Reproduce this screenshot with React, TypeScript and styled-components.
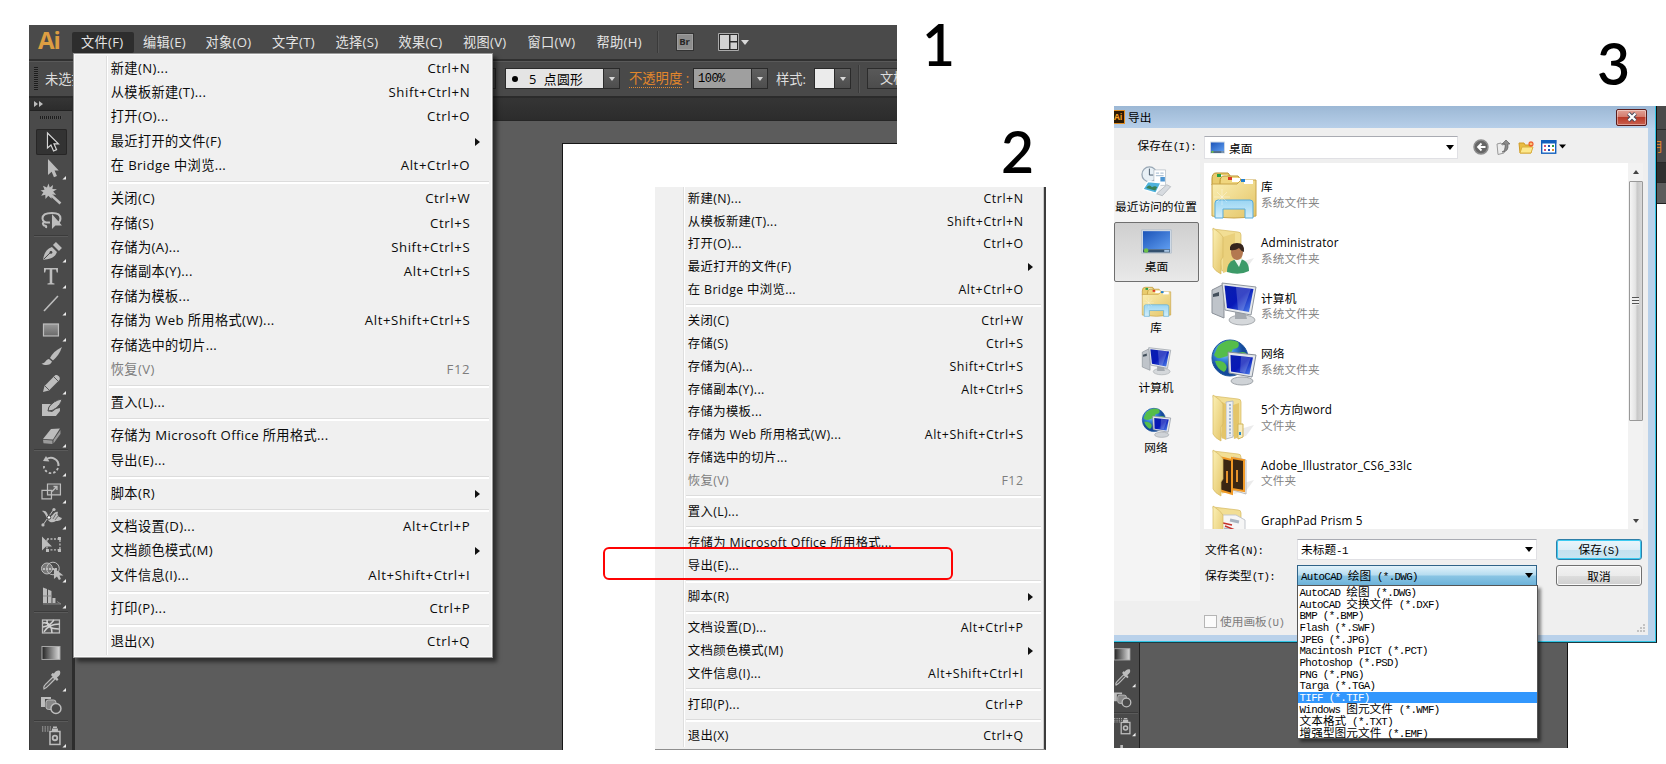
import React from "react";
import styled, { createGlobalStyle, css } from "styled-components";

const ui = `"Open Sans", "Noto Sans CJK SC", sans-serif`;
const mono = `"Liberation Mono", "Noto Sans CJK SC", monospace`;

const Global = createGlobalStyle`
  body { margin: 0; background: #fff; }
  svg { display: block; flex: none; }
  * { box-sizing: border-box; }
`;

const Page = styled.main`
  position: relative;
  width: 1666px;
  height: 764px;
  overflow: hidden;
  background: #fff;
  font-family: ${ui};
`;

const StepNumber = styled.div<{ $x: number; $y: number }>`
  position: absolute;
  left: ${(p) => p.$x}px;
  top: ${(p) => p.$y}px;
  font: 600 57px/57px Lato, sans-serif;
  color: #000;
`;

/* ---------- illustrator window ---------- */

const AppWindow = styled.section`
  position: absolute;
  left: 29px;
  top: 25px;
  width: 868px;
  height: 725px;
  display: flex;
  flex-direction: column;
  overflow: hidden;
`;

const MenuBar = styled.nav`
  flex: none;
  height: 34px;
  display: flex;
  align-items: center;
  background: #4a4a4a;
  color: #e4e4e4;
  font-size: 13.2px;
`;

const Logo = styled.div`
  width: 43px;
  padding-left: 9px;
  height: 34px;
  font: 700 24px/29px "Open Sans", sans-serif;
  letter-spacing: -1px;
  color: #dc9d42;
`;

const BarItem = styled.div<{ $w: number; $active?: boolean }>`
  width: ${(p) => p.$w}px;
  height: 21px;
  margin-top: 1px;
  padding-left: 9px;
  line-height: 20px;
  white-space: nowrap;
  letter-spacing: 0.3px;
  border-radius: 2px;
  background: ${(p) => (p.$active ? "#2d2d2d" : "transparent")};
`;

const Rule = styled.i<{ $h: number; $l: number }>`
  flex: none;
  width: 2px;
  height: ${(p) => p.$h}px;
  margin-left: ${(p) => p.$l}px;
  background: #3a3a3a;
  border-right: 1px solid #565656;
`;

const BridgeButton = styled.div`
  width: 18px;
  height: 18px;
  margin-left: 17px;
  border: 1px solid #333;
  background: #8d8d8d;
  box-shadow: inset 0 0 0 1px #9f9f9f;
  color: #262626;
  font: 700 9.5px/16px "Open Sans", sans-serif;
  text-align: center;
`;

const LayoutButton = styled.div`
  display: flex;
  align-items: center;
  gap: 2px;
  margin-left: 24px;
`;

const ControlBar = styled.div`
  flex: none;
  height: 39px;
  padding-left: 5px;
  display: flex;
  align-items: center;
  background: #494949;
  border-top: 2px solid #303030;
  border-bottom: 2px solid #2b2b2b;
  box-shadow: inset 0 1px 0 #595959;
  color: #dedede;
  font-size: 13.3px;
  white-space: nowrap;
  overflow: hidden;
  & > * {
    flex: none;
  }
`;

const Grip = styled.i<{ $w: number; $h: number; $vertical?: boolean }>`
  flex: none;
  width: ${(p) => p.$w}px;
  height: ${(p) => p.$h}px;
  background: repeating-linear-gradient(
    ${(p) => (p.$vertical ? "180deg" : "90deg")},
    #1d1d1d 0 1px,
    #505050 1px 2px
  );
`;

const SelectionState = styled.span`
  width: 432px;
  margin-left: 7px;
  line-height: 20px;
`;

const Field = styled.div<{ $l: number }>`
  display: flex;
  height: 21px;
  margin-left: ${(p) => p.$l}px;
  border: 1px solid #2a2a2a;
  color: #000;
`;

const FieldValue = styled.div<{ $w: number; $bg: string }>`
  width: ${(p) => p.$w}px;
  display: flex;
  align-items: center;
  padding-left: 4px;
  background: ${(p) => p.$bg};
  font-size: 12.8px;
  line-height: 18px;
  letter-spacing: 0.3px;
  white-space: pre;
`;

const MonoValue = styled.span`
  font-family: "Liberation Mono", monospace;
  font-size: 12px;
  letter-spacing: -0.5px;
`;

const BrushDot = styled.i`
  width: 6px;
  height: 6px;
  margin: 0 11px 0 2px;
  border-radius: 50%;
  background: #000;
`;

const DropButton = styled.div`
  width: 16px;
  display: flex;
  align-items: center;
  justify-content: center;
  background: linear-gradient(#606060, #4d4d4d);
  border-left: 1px solid #2a2a2a;
`;

const Triangle = styled.i<{ $c: string; $s?: number }>`
  width: 0;
  height: 0;
  border: ${(p) => p.$s ?? 3.5}px solid transparent;
  border-top: ${(p) => (p.$s ?? 3.5) + 1}px solid ${(p) => p.$c};
  border-bottom: 0;
`;

const OpacityLabel = styled.span`
  margin-left: 9px;
  width: 64px;
  color: #e2862c;
  line-height: 17px;
  & > u {
    text-decoration: none;
    display: inline-block;
    border-bottom: 1px dotted #e2862c;
  }
`;

const StyleLabel = styled.span`
  margin-left: 8px;
  width: 30px;
`;

const DocButton = styled.div`
  margin-left: 7px;
  width: 80px;
  height: 21px;
  padding-left: 12px;
  line-height: 18px;
  border: 1px solid #2c2c2c;
  background: linear-gradient(#595959, #4c4c4c);
`;

const WorkArea = styled.div`
  flex: 1;
  min-height: 0;
  display: flex;
  background: #5c5c5c;
`;

const DocumentArea = styled.div`
  flex: 1;
  display: flex;
  flex-direction: column;
`;

const TabStrip = styled.div`
  height: 23px;
  background: linear-gradient(#353535, #2c2c2c);
  border-bottom: 1px solid #262626;
`;

const Artboard = styled.div`
  flex: 1;
  margin: 22px 0 0 487px;
  background: #fff;
  border-left: 1px solid #161616;
  border-top: 1px solid #161616;
`;

/* ---------- tool column ---------- */

const ToolColumn = styled.aside<{ $w: number }>`
  flex: none;
  width: ${(p) => p.$w}px;
  display: flex;
  flex-direction: column;
  align-items: center;
  background: #4a4a4a;
  border-left: 1px solid #3a3a3a;
  border-right: 3px solid #2d2d2d;
  overflow: hidden;
`;

const ToolHeader = styled.div`
  flex: none;
  align-self: stretch;
  height: 13px;
  padding: 3px 0 0 4px;
  background: linear-gradient(#353535, #2c2c2c);
  border-bottom: 1px solid #222;
`;

const GripRow = styled.div`
  flex: none;
  height: 18px;
  display: flex;
  align-items: center;
  padding-bottom: 5px;
`;

const ToolCell = styled.div<{ $u: number; $active?: boolean }>`
  flex: none;
  width: 31px;
  height: ${(p) => p.$u}px;
  display: flex;
  align-items: center;
  justify-content: center;
  ${(p) =>
    p.$active &&
    css`
      background: #333;
      box-shadow: inset 0 0 0 1px #272626;
      border-radius: 2px;
    `}
`;

const ToolRule = styled.i<{ $w: number }>`
  flex: none;
  width: ${(p) => p.$w}px;
  height: 2px;
  margin-bottom: 1px;
  background: #3b3b3b;
  border-bottom: 1px solid #5a5a5a;
`;

const c = "#bdbdbd";
const tools: Record<string, React.ReactNode> = {
  select: <path d="M10.5 4v15l3.5-3 2.6 6 3-1.3-2.6-5.8h4.5z" fill="#222" stroke="#d5d5d5" strokeWidth="1.2" />,
  direct: <path d="M11 4v16l3.7-3.2 2.3 5.4 3-1.2-2.4-5.4h4.2z" fill={c} />,
  wand: (
    <>
      <path d="M13 12l10.500 9.500" stroke={c} strokeWidth="2.600" />
      <path d="M11.500 1.500l1.300 4 3.300-2.500-.7 4 4.600.2-3.800 2.300 3 3.400-4.300-.4-.3 4.200-3.300-3-2.800 3.400-.2-4.300-4.100 1 2.200-3.500-2.900-1.700 4-.8-1.500-4 4 1.700z" fill={c} />
    </>
  ),
  lasso: (
    <>
      <path d="M13 14.500c-4 .5-7.500-.5-7.500-4 0-4 4.500-5.500 9.500-5.500s8.500 2 8.500 5.500-1.500 4-3.500 5M9 14.500c-2.500-1-4 1-2.500 2.500s3.500 0 2.500 3" fill="none" stroke={c} strokeWidth="2" />
      <path d="M15 6v15l3.500-3.500h6.500z" fill={c} />
    </>
  ),
  pen: (
    <>
      <path d="M6 22c1-6 3-11 9-13l5 5c-2 6-7 7-14 8z" fill={c} />
      <path d="M16 7l3-3 6 6-3 3z" fill={c} />
      <path d="M6.500 21.500l7-7" stroke="#444" />
      <circle cx="14" cy="14.500" r="1.400" fill="#444" />
    </>
  ),
  type: <path d="M7 4h14v4.500h-1.200L19 5.600h-3.700V19l2.200.6v1h-7v-1l2.200-.6V5.600H9L8.200 8.500H7z" fill={c} />,
  line: <path d="M7 20L21 5" stroke={c} strokeWidth="1.600" />,
  rect: <rect x="6.500" y="7" width="15" height="12" fill="url(#toolRect)" stroke={c} strokeWidth="1.200" />,
  brush: (
    <>
      <path d="M25 3c-6 3-10 7-12 11l3 2.500C20 13 23 9 25 3z" fill={c} />
      <path d="M12 15c-3 0-3 4-7.500 4.800C8 22 14 21.500 15 17.500z" fill={c} />
    </>
  ),
  pencil: (
    <>
      <path d="M6 22l1.500-6L18 5.500c2-1.500 6 1.500 4.500 4.500L12 20.500z" fill={c} />
      <path d="M8 16l4 4M17 7l4 4" stroke="#555" />
    </>
  ),
  blob: (
    <>
      <path d="M5 8h9l-2 3-1 4 4 1 4-3 4-1v3l-4 5H5z" fill={c} />
      <path d="M25 3c-6 1-10 4-13 8l-1 4 4-.5c4.500-2 9-6 10-11.500z" fill={c} stroke="#4a4a4a" />
    </>
  ),
  eraser: (
    <>
      <path d="M6 16l8-10 9-.5-7 11z" fill={c} />
      <path d="M6 16.800l9.500.7v3.500l-9-.7zM16.500 17l7-10v4l-7 9.500z" fill="#9a9a9a" />
    </>
  ),
  rotate: (
    <>
      <path d="M9 7.500c6-4 13 0 12.500 6.500" fill="none" stroke={c} strokeWidth="2" />
      <path d="M21 16c-2 6.500-11 7.500-14 0v-4" fill="none" stroke={c} strokeWidth="1.800" strokeDasharray="2.500 2" />
      <path d="M6 9l3-5 3.500 5.500z" fill={c} />
    </>
  ),
  scale: (
    <>
      <path d="M10.500 5h13v11h-13z" fill="#5a5a5a" stroke={c} strokeWidth="1.200" />
      <path d="M5 11.500h9.500v8.500H5z" fill="none" stroke={c} strokeWidth="1.200" />
      <path d="M15 12.500l5-5m-3.500 0H20V11" fill="none" stroke={c} strokeWidth="1.400" />
    </>
  ),
  width: (
    <>
      <path d="M5 6c5-1 5 3 7 6 4 0 5-6 9-5-1 3 0 5 4 6-1 3-4 3-6 3-3 2-6 2-8-1-2-3-2-6-6-9z" fill={c} />
      <path d="M16 14l3-5M18 15l4-5" stroke="#555" strokeWidth=".8" />
      <path d="M6 20L17 4" stroke={c} />
      <circle cx="12" cy="12.500" r="1.800" fill="#fff" stroke="#444" />
      <circle cx="6" cy="20" r="1.600" fill={c} />
      <circle cx="17" cy="4.500" r="1.600" fill={c} />
    </>
  ),
  free: (
    <>
      <rect x="10" y="7" width="13" height="11" fill="none" stroke={c} strokeWidth="1.300" strokeDasharray="2 1.500" />
      <path d="M5 4.500v14l4-4h6z" fill={c} />
      <path d="M21 5h3v3h-3zM21 17h3v3h-3zM9 17h3v3H9z" fill={c} />
    </>
  ),
  shape: (
    <>
      <circle cx="10" cy="10.500" r="5.500" fill="#777" stroke={c} />
      <circle cx="16" cy="10.500" r="6.300" fill="none" stroke={c} />
      <path d="M6 11h14" stroke={c} strokeWidth="2" strokeDasharray="2 1" />
      <path d="M17 10v11l3-2.500 2 3.500 2-1-1.500-3.500h4z" fill={c} />
    </>
  ),
  perspective: (
    <>
      <path d="M6 3.500l4 1.500v14H6zM11 5.500l3.500 1.500v12H11zM15.500 14h3v5h-3z" fill={c} />
      <path d="M6 20h18l-4-2.500M6 12h9" stroke="#888" fill="none" />
    </>
  ),
  mesh: (
    <>
      <rect x="5.500" y="6" width="17" height="13" fill="#555" stroke={c} strokeWidth="1.300" />
      <path d="M6 9c7-1 9 5 9 10M10 6c0 8 5 9 12 9M7 18c4-6 8-8 16-8M17 6c-3 4-5 6-11 7" fill="none" stroke="#d0d0d0" strokeWidth="1.500" />
    </>
  ),
  gradient: <rect x="5" y="6.500" width="18" height="13" fill="url(#toolGrad)" stroke="#a9a9a9" />,
  dropper: (
    <>
      <path d="M7 22c-1-3 1-4 9-12l2 2C10 20 10 21 7 22z" fill="#555" stroke={c} strokeWidth="1.200" />
      <path d="M14 8l6 6 1.500-1.500-1.500-2c3-2 4-4 3-6.500-2-1-4.500 0-6 2.500l-1.500-.5z" fill={c} />
    </>
  ),
  blend: (
    <>
      <path d="M4 4h10v2H8v8H4z" fill={c} />
      <rect x="9" y="7" width="10" height="9.500" rx="2.500" fill="#888" stroke={c} />
      <circle cx="19" cy="15.500" r="5" fill="#4a4a4a" stroke={c} strokeWidth="1.500" />
    </>
  ),
  spray: (
    <>
      <rect x="13" y="8.500" width="10" height="13" fill="#4a4a4a" stroke={c} strokeWidth="1.500" />
      <path d="M15 5.500h6v3h-6zM16 3.500h4v1.500h-4z" fill={c} />
      <circle cx="18" cy="15" r="2.300" fill="none" stroke={c} strokeWidth="1.800" />
      <path d="M5 4h9M5 6h9M5 8h7" stroke={c} strokeDasharray="1.300 1.300" />
    </>
  ),
  graph: <path d="M7 12h3v12H7zM12 8h3v16h-3zM17 14h3v10h-3z" fill={c} />,
};

const corner = "direct pen type line rect pencil eraser rotate scale width shape perspective dropper spray".split(" ");

function Tool({ name, unit }: { name: string; unit: number }) {
  return (
    <ToolCell $u={unit} $active={name === "select"}>
      <svg width={unit * 1.17} height={unit} viewBox="-1 0 31 26.500">
        {tools[name]}
        {corner.includes(name) && <path d="M29.500 20.500v4h-4z" fill="#eee" />}
      </svg>
    </ToolCell>
  );
}

const leftTools = "select direct wand lasso | pen type line rect brush pencil blob eraser | rotate scale width free shape perspective | mesh gradient dropper blend | spray".split(" ");

function ToolList({ names, unit }: { names: string[]; unit: number }) {
  return (
    <>
      {names.map((n, i) => (n === "|" ? <ToolRule key={i} $w={unit * 1.25} /> : <Tool key={i} name={n} unit={unit} />))}
    </>
  );
}

/* ---------- file menu ---------- */

const MenuBox = styled.div<{ $x: number; $y: number; $w: number; $h: number; $size: number; $cropped?: boolean }>`
  position: absolute;
  left: ${(p) => p.$x}px;
  top: ${(p) => p.$y}px;
  width: ${(p) => p.$w}px;
  height: ${(p) => p.$h}px;
  font-size: ${(p) => p.$size}px;
  background: #f0f0f0;
  color: #0a0a0a;
  ${(p) =>
    p.$cropped
      ? css`
          border-right: 2px solid #3c3c3c;
          border-bottom: 1px solid #8e8e8e;
          box-shadow: inset -1px 0 0 #c9c9c9;
        `
      : css`
          padding-top: 2.300px;
          border: 1px solid #999;
          box-shadow: inset 0 0 0 1px #fafafa, 4px 4px 4px rgba(0, 0, 0, 0.5);
        `}
`;

const MenuInner = styled.div<{ $gutter: number; $top: number }>`
  height: calc(100% - 2px);
  padding-top: ${(p) => p.$top}px;
  margin-left: ${(p) => p.$gutter}px;
  border-left: 1px solid #dedede;
  box-shadow: inset 1px 0 0 #fff;
`;

const MenuRow = styled.div<{ $disabled?: boolean }>`
  height: 1.8475em;
  display: flex;
  align-items: center;
  padding-left: 4.300px;
  line-height: 1.500;
  white-space: nowrap;
  color: ${(p) => (p.$disabled ? "#7d7d7d" : "inherit")};
`;

const MenuLabel = styled.span`
  flex: 1;
  letter-spacing: 0.028em;
`;

const Shortcut = styled.span`
  letter-spacing: 0.046em;
`;

const ArrowSlot = styled.span`
  width: 1.650em;
  padding-left: 0.380em;
`;

const SubArrow = styled.i`
  display: block;
  width: 0;
  height: 0;
  border: 4px solid transparent;
  border-left: 5px solid #111;
  border-right: 0;
`;

const MenuRule = styled.div`
  height: 0.667em;
  display: flex;
  align-items: center;
  padding: 0 3px 0 2px;
  &::before {
    content: "";
    flex: 1;
    height: 2px;
    background: #fff;
    border-top: 1px solid #dcdcdc;
  }
`;

const entries: (null | [string, string?])[] = [
  ["新建(N)...", "Ctrl+N"],
  ["从模板新建(T)...", "Shift+Ctrl+N"],
  ["打开(O)...", "Ctrl+O"],
  ["最近打开的文件(F)", ">"],
  ["在 Bridge 中浏览...", "Alt+Ctrl+O"],
  null,
  ["关闭(C)", "Ctrl+W"],
  ["存储(S)", "Ctrl+S"],
  ["存储为(A)...", "Shift+Ctrl+S"],
  ["存储副本(Y)...", "Alt+Ctrl+S"],
  ["存储为模板..."],
  ["存储为 Web 所用格式(W)...", "Alt+Shift+Ctrl+S"],
  ["存储选中的切片..."],
  ["恢复(V)", "F12"],
  null,
  ["置入(L)..."],
  null,
  ["存储为 Microsoft Office 所用格式..."],
  ["导出(E)..."],
  null,
  ["脚本(R)", ">"],
  null,
  ["文档设置(D)...", "Alt+Ctrl+P"],
  ["文档颜色模式(M)", ">"],
  ["文件信息(I)...", "Alt+Shift+Ctrl+I"],
  null,
  ["打印(P)...", "Ctrl+P"],
  null,
  ["退出(X)", "Ctrl+Q"],
];

function FileMenuItems({ gutter, top = 0 }: { gutter: number; top?: number }) {
  return (
    <MenuInner $gutter={gutter} $top={top}>
      {entries.map((e, i) =>
        e === null ? (
          <MenuRule key={i} />
        ) : (
          <MenuRow key={i} $disabled={e[0] === "恢复(V)"}>
            <MenuLabel>{e[0]}</MenuLabel>
            {e[1] && e[1] !== ">" && <Shortcut>{e[1]}</Shortcut>}
            <ArrowSlot>{e[1] === ">" && <SubArrow />}</ArrowSlot>
          </MenuRow>
        )
      )}
    </MenuInner>
  );
}

const Callout = styled.div`
  position: absolute;
  left: 603px;
  top: 547px;
  width: 350px;
  height: 33px;
  border: 2px solid #fe0303;
  border-radius: 6px;
`;

/* ---------- export dialog ---------- */

const Backdrop = styled.div`
  position: absolute;
  left: 1114px;
  top: 642px;
  width: 454px;
  height: 106px;
  display: flex;
  background: #5c5c5c;
  border-top: 1px solid #222;
  border-right: 1px solid #111;
`;

const BackTools = styled.div`
  width: 26px;
  display: flex;
  flex-direction: column;
  align-items: flex-end;
  padding: 0 1px 0 0;
  background: #4a4a4a;
  border-right: 1px solid #222;
  overflow: hidden;
`;

const Sliver = styled.div`
  position: absolute;
  left: 1656px;
  top: 106px;
  width: 10px;
  height: 98px;
  display: flex;
  flex-direction: column;
  overflow: hidden;
  background: #5c5c5c;
  border-bottom: 1px solid #222;
`;

const SliverBar = styled.div<{ $h: number; $bg: string }>`
  flex: none;
  height: ${(p) => p.$h}px;
  background: ${(p) => p.$bg};
  border-bottom: 1px solid #2a2a2a;
  color: #e2862c;
  font-size: 13px;
  line-height: 33px;
  display: flex;
  justify-content: flex-end;
  padding-right: 4px;
`;

const Dialog = styled.section`
  position: absolute;
  left: 1114px;
  top: 106px;
  width: 543px;
  height: 537px;
  display: flex;
  flex-direction: column;
  background: #b9d1ea;
  border-right: 1px solid #111;
  border-bottom: 1px solid #1d3b42;
  box-shadow: inset -1px -1px 0 #2fc4e4;
  color: #000;
  font-size: 11.7px;
`;

const TitleBar = styled.header`
  flex: none;
  height: 22px;
  margin-right: 1px;
  display: flex;
  align-items: center;
  background: linear-gradient(#9cb8d5, #b7cfe9);
`;

const TitleIcon = styled.div`
  width: 11px;
  height: 14px;
  border: 1.500px solid #e08e25;
  border-left: 0;
  background: #2b1a04;
  color: #f59a20;
  font: 700 8.500px/11px "Open Sans", sans-serif;
`;

const TitleText = styled.span`
  flex: 1;
  margin-left: 3px;
  padding-bottom: 1px;
`;

const CloseButton = styled.div`
  width: 31px;
  height: 17px;
  margin-right: 8px;
  display: flex;
  align-items: center;
  justify-content: center;
  border: 1px solid #5b1c1a;
  border-radius: 2px;
  background: linear-gradient(#e2a296, #d2796b 48%, #b93a28 50%, #c9604f);
  box-shadow: inset 0 0 0 1px rgba(255, 255, 255, 0.4);
`;

const Body = styled.div`
  height: 507px;
  width: 534px;
  display: flex;
  background: #efefef;
`;

const Left = styled.div`
  flex: none;
  width: 90px;
`;

const LookIn = styled.div`
  height: 32px;
  padding: 2px 8px 0 0;
  display: flex;
  align-items: center;
  justify-content: flex-end;
`;

const Places = styled.div`
  width: 86px;
  height: 441px;
  padding-top: 1.500px;
  background: #f4f4f4;
  display: flex;
  flex-direction: column;
`;

const Place = styled.div<{ $on?: boolean }>`
  height: 60.400px;
  width: 85px;
  display: flex;
  flex-direction: column;
  align-items: center;
  justify-content: space-between;
  padding: 4px 1px 7px 0;
  line-height: 17px;
  white-space: nowrap;
  ${(p) =>
    p.$on &&
    css`
      background: linear-gradient(#cfcfcf, #e9e9e9);
      border: 1px solid #6f6f6f;
      border-radius: 2px;
      padding: 3px 0 6px;
    `}
`;

const Right = styled.div`
  flex: 1;
  display: flex;
  flex-direction: column;
`;

const TopRow = styled.div`
  height: 35px;
  padding-top: 8px;
  display: flex;
  align-items: flex-start;
`;

const LocationBox = styled.div`
  width: 254px;
  height: 23px;
  display: flex;
  align-items: center;
  gap: 4px;
  padding: 0 3px 0 5px;
  margin-right: 15px;
  background: #fff;
  border: 1px solid #e0e0e4;
  border-top-color: #a9abb2;
  & > span {
    flex: 1;
  }
`;

const DialogTools = styled.div`
  display: flex;
  align-items: center;
  gap: 7px;
  padding-top: 3px;
`;

const FilePane = styled.div`
  height: 366px;
  width: 439px;
  display: flex;
  background: #fff;
  overflow: hidden;
`;

const FileList = styled.div`
  flex: 1;
  padding: 4px 0 0 6px;
`;

const FileRow = styled.div`
  height: 55.700px;
  display: flex;
  align-items: center;
  gap: 3px;
`;

const FileText = styled.div`
  display: flex;
  flex-direction: column;
  line-height: 16.500px;
  letter-spacing: 0.180px;
  & > small {
    font-size: 11.600px;
    color: #858585;
  }
`;

const ScrollTrack = styled.div`
  width: 15px;
  background: #f2f2f2;
  display: flex;
  flex-direction: column;
  align-items: center;
  padding: 7px 0 6px;
`;

const ScrollThumb = styled.div`
  width: 14px;
  height: 240px;
  margin: 7px 0 auto;
  display: flex;
  align-items: center;
  justify-content: center;
  border: 1px solid #999;
  border-radius: 1px;
  background: linear-gradient(90deg, #f5f5f5, #e4e4e4 45%, #c8c8c8 60%, #d9d9d9);
`;

const ThumbGrip = styled.i`
  width: 7px;
  height: 8px;
  background: repeating-linear-gradient(#555 0 1.300px, #eee 1.300px 3px);
`;

const UpArrow = styled.i`
  width: 0;
  height: 0;
  border: 3.500px solid transparent;
  border-bottom: 4px solid #444;
  border-top: 0;
`;

const FormRow = styled.div<{ $mt: number }>`
  display: flex;
  align-items: center;
  height: 22px;
  margin-top: ${(p) => p.$mt}px;
  padding-left: 1px;
`;

const FormLabel = styled.div`
  width: 92px;
`;

const Combo = styled.div<{ $open?: boolean }>`
  position: relative;
  width: 240px;
  height: 21px;
  display: flex;
  align-items: center;
  justify-content: space-between;
  padding: 0 3px 0 3px;
  border: 1px solid ${(p) => (p.$open ? "#2f6388" : "#e0e0e4")};
  border-top-color: ${(p) => (p.$open ? "#2f6388" : "#a9abb2")};
  background: ${(p) => (p.$open ? "linear-gradient(#e2f3fb, #b5dcf0 48%, #8ac5e4 52%, #6db3da)" : "#fff")};
`;

const PushButton = styled.div<{ $primary?: boolean }>`
  width: 86px;
  height: 21px;
  margin-left: 19px;
  display: flex;
  align-items: center;
  justify-content: center;
  border-radius: 3px;
  border: 1px solid ${(p) => (p.$primary ? "#2f7fa8" : "#707070")};
  background: ${(p) =>
    p.$primary ? "linear-gradient(#e9f5fb, #dceef7 50%, #c4e1ef 52%, #c9e6f3)" : "linear-gradient(#f2f2f2, #ebebeb 50%, #dddddd 52%, #cfcfcf)"};
  box-shadow: inset 0 0 0 1px ${(p) => (p.$primary ? "#3ccbf2" : "#fafafa")};
`;

const Options = styled.div`
  position: absolute;
  top: 19px;
  left: -1px;
  width: 241px;
  height: 154px;
  padding-top: 1px;
  background: #fff;
  border: 1px solid #555;
  box-shadow: 3px 3px 3px rgba(0, 0, 0, 0.45);
`;

const Option = styled.div<{ $on?: boolean }>`
  height: 11.690px;
  padding-left: 1.500px;
  display: flex;
  align-items: center;
  line-height: 11.690px;
  color: ${(p) => (p.$on ? "#fff" : "#000")};
  background: ${(p) => (p.$on ? "#3297fd" : "transparent")};
`;

const CheckRow = styled.div`
  display: flex;
  align-items: center;
  margin-top: 27px;
  gap: 3px;
  color: #7d7d7d;
`;

const CheckBox = styled.i`
  width: 13px;
  height: 13px;
  border: 1px solid #b5b5b5;
  background: #fbfbfb;
`;

const SizeGrip = styled.div`
  align-self: flex-end;
  margin: -5px 2px 0 0;
`;

const Han = styled.span`
  font: 11.700px/1 "Noto Sans CJK SC", sans-serif;
`;

const Half = styled.span`
  font: 10.800px/1 ${mono};
  letter-spacing: -0.640px;
  white-space: pre;
`;

function FixedText({ children }: { children: string }) {
  return (
    <span>
      {children.split(/([\u4e00-\u9fff]+)/).map((t, i) => (i % 2 ? <Han key={i}>{t}</Han> : <Half key={i}>{t}</Half>))}
    </span>
  );
}

/* ---------- explorer artwork ---------- */

const Library = () => (
  <>
    <path d="M2 8q0-6 4-6h12l3 4v8H2z" fill="#e9cc6e" stroke="#b99330" />
    <path d="M9 4h8l3 3h-9z" fill="#fff" />
    <path d="M10 11q0-6 4-6h14l3 4v8H10z" fill="#f0d67e" stroke="#b99330" />
    <path d="M22 7h8v4h-8z" fill="#fff" />
    <path d="M7 3h4v3H7z" fill="#24a148" />
    <path d="M18 6h4v3h-4z" fill="#da3a25" />
    <path d="M2 13h25l4-4h15v36q-22 4-44 0z" fill="url(#folder)" stroke="#c9a448" />
    <path d="M34 9h9v4h-9z" fill="#fff" />
    <path d="M31 8h4v3h-4z" fill="#2280d0" />
    <path d="M5 32q0-3 3-3h32q3 0 3 3v15h-8V38H13v9H5z" fill="url(#glass)" stroke="#58abd9" />
    <path d="M12 18v16M4 26h16M7 21l10 10M17 21L7 31" stroke="#fff" opacity=".35" fill="none" />
  </>
);

const FolderBack = () => (
  <>
    <path d="M20 38l24-7-8 11-12 3z" fill="#ddd" opacity=".6" />
    <path d="M3 2l25 3q3 0 3 3v32l-19 4z" fill="#f2de94" stroke="#d5b962" strokeWidth=".7" />
  </>
);
const FolderFront = () => <path d="M3 1q8 5 10 9v20l-2 3v14q-6-3-8-7z" fill="url(#folder)" stroke="#d5b962" strokeWidth=".7" />;

const UserFolder = () => (
  <>
    <FolderBack />
    <path d="M13 10l12-4v36l-12 4z" fill="#ead07c" />
    <FolderFront />
    <path d="M17 45q0-12 11-13 11 0 11 12-10 5-22 1z" fill="#3c9a68" />
    <path d="M24 32h8l-3 8z" fill="#eef8f2" />
    <ellipse cx="27" cy="25" rx="6" ry="8" fill="#b37850" />
    <path d="M20 23q-1-7 7-7t7 9q-3-1-5-4-4 3-9 2z" fill="#35251e" />
  </>
);

const Computer = () => (
  <>
    <path d="M2 8l12-6v34L2 31z" fill="#bfc4ca" stroke="#8b9199" />
    <path d="M3 12l6-2v4l-6 1z" fill="#44505c" />
    <ellipse cx="32" cy="38" rx="13" ry="5" fill="#d5d8db" stroke="#a8acb0" />
    <path d="M25 29h10l2 8H25z" fill="#a4a9af" />
    <path d="M12 1l34 4-5 28-26-5z" fill="#e5e8eb" stroke="#8f969e" />
    <path d="M14.500 3.500l29 3.500-4.500 23-22-4z" fill="url(#screen)" />
    <path d="M26 5l15 1.700L33 29l-5-1z" fill="#fff" opacity=".2" />
  </>
);

const Network = () => (
  <>
    <circle cx="20" cy="20" r="18" fill="url(#globe)" stroke="#1d559b" />
    <path d="M8 8q10-9 20-4 3 6-5 7-3 7-9 8-7 3-10-2zM5 23q8-1 11 4 2 4-2 7-7-3-9-11zM26 17q5-5 10-2l1 7-8 3z" fill="#55bd4a" />
    <ellipse cx="32" cy="43" rx="11" ry="4" fill="#cfd3d7" stroke="#9ea3a8" />
    <path d="M18 14l28 3-4 22-23-4z" fill="#e3e6ea" stroke="#858d98" />
    <path d="M20.500 17l22.500 2.500-3.500 17-18.500-3z" fill="url(#screen)" />
    <path d="M31 18.500l10 1L35 35l-5-1z" fill="#fff" opacity=".2" />
  </>
);

const WordFolder = () => (
  <>
    <FolderBack />
    <path d="M16 8l7-1v36l-7 2z" fill="#eceff2" stroke="#b7bcc2" />
    <path d="M20 10v32" stroke="#5b81ad" strokeDasharray="2 1.500" />
    <path d="M12 8l4 2v36l-4-2zM23 11l6-2v34l-5 2z" fill="#e4c569" />
    <path d="M28 30h5v13l-5 2z" fill="#f7ecc2" stroke="#d2b558" />
    <path d="M29 38h2v3h-2z" fill="#2788c8" />
    <FolderFront />
  </>
);

const AiFolder = () => (
  <>
    <FolderBack />
    <path d="M23 8l13 3v34l-13-4z" fill="#f2f2f2" stroke="#bbb" />
    <path d="M22 9l12 2v31l-12-2z" fill="#3b2712" stroke="#f29a26" strokeWidth="2" />
    <path d="M9 8l13 3v34l-13-4z" fill="#3b2712" stroke="#f29a26" strokeWidth="2" />
    <path d="M17 22v12M27 21v12" stroke="#e6932b" strokeWidth="2" />
    <FolderFront />
  </>
);

const PrismFolder = () => (
  <>
    <FolderBack />
    <path d="M12 10h14l9 5v33H12z" fill="#f6f6f6" stroke="#c3c7cd" />
    <path d="M20 15l9 2M14 24l16 3" stroke="#aab4c0" strokeWidth="3" />
    <path d="M13 18l9 2M15 21l10 4" stroke="#c5302a" strokeWidth="1.500" />
    <FolderFront />
  </>
);

const Desktop = () => (
  <>
    <path d="M1 6h46v36H1z" fill="#dce4ec" stroke="#a3b3c4" />
    <path d="M3 8h42v28H3z" fill="url(#desk)" />
    <path d="M3 36h42v5H3z" fill="#33506f" />
    <circle cx="8" cy="38" r="3.500" fill="#6cc04a" />
    <path d="M36 37h8v3h-8z" fill="#a9c6e4" />
  </>
);

const Recent = () => (
  <>
    <circle cx="13" cy="13" r="11.500" fill="#e8f0f6" stroke="#98a7b5" strokeWidth="2" />
    <path d="M13 4v10h6" stroke="#4a5c6c" fill="none" strokeWidth="1.500" />
    <path d="M20 6h18v24H20z" fill="#fff" stroke="#aab4be" />
    <path d="M23 11h5M30 11h5M23 15h12" stroke="#9bb4ca" strokeWidth="1.500" />
    <path d="M30 17h7v7h-7z" fill="#4c95d2" />
    <path d="M24 43l16-14 6 3-13 14z" fill="#d7dbe0" stroke="#a3a9b0" />
    <path d="M11 24l20 2-8 16-20-6z" fill="#4fb2dc" stroke="#fff" strokeWidth="2" />
    <path d="M8 34q5-7 9-1 5-3 8 0l-3 5z" fill="#3a8156" />
  </>
);

function Art({ size, children }: { size: number; children: React.ReactNode }) {
  return (
    <svg width={size} height={size} viewBox="0 0 48 48">
      {children}
    </svg>
  );
}

const Defs = () => (
  <svg width="0" height="0">
    <defs>
      <linearGradient id="folder" x2="1" y2="1"><stop stopColor="#fbf0b5" /><stop offset="1" stopColor="#e3c365" /></linearGradient>
      <linearGradient id="glass" x2="0" y2="1"><stop stopColor="#9ad5f2" /><stop offset="1" stopColor="#d3effb" /></linearGradient>
      <linearGradient id="screen" x2="1" y2="1"><stop stopColor="#0a1fae" /><stop offset=".5" stopColor="#0718b8" /><stop offset="1" stopColor="#5489ef" /></linearGradient>
      <linearGradient id="desk" x2="1" y2="1"><stop stopColor="#1c54b8" /><stop offset="1" stopColor="#5f9df0" /></linearGradient>
      <radialGradient id="globe" cx=".35" cy=".3"><stop stopColor="#bfe6ff" /><stop offset=".5" stopColor="#3a8ae0" /><stop offset="1" stopColor="#14499c" /></radialGradient>
      <linearGradient id="toolRect" x2="0" y2="1"><stop stopColor="#999" /><stop offset="1" stopColor="#6a6a6a" /></linearGradient>
      <linearGradient id="toolGrad"><stop stopColor="#222" /><stop offset="1" stopColor="#ddd" /></linearGradient>
    </defs>
  </svg>
);

const barItems: [string, number][] = [
  ["文件(F)", 62], ["编辑(E)", 62.5], ["对象(O)", 66.5], ["文字(T)", 63.5], ["选择(S)", 63],
  ["效果(C)", 64.5], ["视图(V)", 64.5], ["窗口(W)", 69], ["帮助(H)", 69],
];

const places: [string, React.ReactNode][] = [
  ["最近访问的位置", <Recent />], ["桌面", <Desktop />], ["库", <Library />], ["计算机", <Computer />], ["网络", <Network />],
];

const files: [string, string, React.ReactNode][] = [
  ["库", "系统文件夹", <Library />],
  ["Administrator", "系统文件夹", <UserFolder />],
  ["计算机", "系统文件夹", <Computer />],
  ["网络", "系统文件夹", <Network />],
  ["5个方向word", "文件夹", <WordFolder />],
  ["Adobe_Illustrator_CS6_33lc", "文件夹", <AiFolder />],
  ["GraphPad Prism 5", "文件夹", <PrismFolder />],
];

const formats = [
  "AutoCAD 绘图 (*.DWG)", "AutoCAD 交换文件 (*.DXF)", "BMP (*.BMP)", "Flash (*.SWF)", "JPEG (*.JPG)",
  "Macintosh PICT (*.PCT)", "Photoshop (*.PSD)", "PNG (*.PNG)", "Targa (*.TGA)", "TIFF (*.TIF)",
  "Windows 图元文件 (*.WMF)", "文本格式 (*.TXT)", "增强型图元文件 (*.EMF)",
];

function IllustratorWindow() {
  return (
    <AppWindow>
      <MenuBar>
        <Logo>Ai</Logo>
        {barItems.map(([t, w], i) => (
          <BarItem key={t} $w={w} $active={i === 0}>{t}</BarItem>
        ))}
        <Rule $h={22} $l={0} />
        <BridgeButton>Br</BridgeButton>
        <LayoutButton>
          <svg width="21" height="18" viewBox="0 0 21 18">
            <path d="M.5.5h20v17H.5z" fill="#2c2c2c" stroke="#aaa" />
            <path d="M2 2h9v14H2zM12.500 2H19v6h-6.500zM12.500 9.500H19V16h-6.500z" fill="#d2d2d2" />
          </svg>
          <Triangle $c="#d8d8d8" $s={4} />
        </LayoutButton>
      </MenuBar>
      <ControlBar>
        <Grip $w={4} $h={23} $vertical />
        <SelectionState>未选择对象</SelectionState>
        <Field $l={13}>
          <FieldValue $w={0} $bg="#494949" />
        </Field>
        <Field $l={9}>
          <FieldValue $w={97} $bg="#e4e4e4"><BrushDot />5  点圆形</FieldValue>
          <DropButton><Triangle $c="#d8d8d8" /></DropButton>
        </Field>
        <OpacityLabel><u>不透明度</u> :</OpacityLabel>
        <Field $l={0}>
          <FieldValue $w={57} $bg="#9f9f9f"><MonoValue>100%</MonoValue></FieldValue>
          <DropButton><Triangle $c="#d8d8d8" /></DropButton>
        </Field>
        <StyleLabel>样式:</StyleLabel>
        <Field $l={8}>
          <FieldValue $w={19} $bg="#ebebeb" />
          <DropButton><Triangle $c="#d8d8d8" /></DropButton>
        </Field>
        <Rule $h={28} $l={7} />
        <DocButton>文档设置</DocButton>
      </ControlBar>
      <WorkArea>
        <ToolColumn $w={46}>
          <ToolHeader>
            <svg width="10" height="6" viewBox="0 0 10 6"><path d="M0 0l4 3-4 3zM5 0l4 3-4 3z" fill="#bbb" /></svg>
          </ToolHeader>
          <GripRow><Grip $w={22} $h={3} /></GripRow>
          <ToolList names={leftTools} unit={26.45} />
        </ToolColumn>
        <DocumentArea>
          <TabStrip />
          <Artboard />
        </DocumentArea>
      </WorkArea>
    </AppWindow>
  );
}

function ExportDialog() {
  return (
    <Dialog>
      <TitleBar>
        <TitleIcon>Ai</TitleIcon>
        <TitleText>导出</TitleText>
        <CloseButton>
          <svg width="12" height="10" viewBox="0 0 12 10"><path d="M2.500 1.500l7 7M9.500 1.500l-7 7" stroke="#444b5e" strokeWidth="4" /><path d="M2.500 1.500l7 7M9.500 1.500l-7 7" stroke="#fff" strokeWidth="2.200" /></svg>
        </CloseButton>
      </TitleBar>
      <Body>
        <Left>
          <LookIn><FixedText>保存在(I):</FixedText></LookIn>
          <Places>
            {places.map(([name, art], i) => (
              <Place key={name} $on={i === 1}><Art size={31}>{art}</Art>{name}</Place>
            ))}
          </Places>
        </Left>
        <Right>
          <TopRow>
            <LocationBox><Art size={15}><Desktop /></Art><span>桌面</span><Triangle $c="#000" $s={4} /></LocationBox>
            <DialogTools>
              <svg width="16" height="16" viewBox="0 0 16 16"><circle cx="8" cy="8" r="7" fill="#666" stroke="#8d8d8d" strokeWidth="1.500" /><path d="M12.500 8H5m3.500-3.500L5 8l3.500 3.500" fill="none" stroke="#fff" strokeWidth="1.800" /></svg>
              <svg width="15" height="16" viewBox="0 0 15 16"><path d="M1 5l4-1 1 2 4-1-2 9-6 1.500z" fill="#ececec" stroke="#999" /><path d="M6 13q4-1 3-8H6l4-4 4 4h-2q1 8-6 8z" fill="#8b8b8b" stroke="#555" strokeWidth=".6" /></svg>
              <svg width="16" height="16" viewBox="0 0 16 16"><path d="M1 4h5l1 2h6v8H2z" fill="#e9bd43" stroke="#d09c28" /><path d="M2 14l2-6h11l-2 6z" fill="#fce88d" stroke="#dbb040" /><path d="M13 2v6M10 5h6M11 3l4 4M15 3l-4 4" stroke="#f0602c" strokeWidth="1.200" /><circle cx="13" cy="5" r="1" fill="#ffe28a" /></svg>
              <svg width="25" height="16" viewBox="0 0 25 16"><rect x=".7" y="1.700" width="14" height="12.500" fill="#fff" stroke="#1260bd" strokeWidth="1.400" /><path d="M0 1h15.400v3.500H0z" fill="#1260bd" /><path d="M3 6h2v2H3zM3 10h2v2H3z" fill="#d0527a" /><path d="M7 6h2v2H7zM7 10h2v2H7z" fill="#1b50b5" /><path d="M11 6h2v2h-2z" fill="#2c9a40" /><path d="M11 10h2v2h-2z" fill="#e38a2a" /><path d="M18 5.500h7L21.500 9.500z" fill="#000" /></svg>
            </DialogTools>
          </TopRow>
          <FilePane>
            <FileList>
              {files.map(([name, kind, art]) => (
                <FileRow key={name}><Art size={48}>{art}</Art><FileText>{name}<small>{kind}</small></FileText></FileRow>
              ))}
            </FileList>
            <ScrollTrack>
              <UpArrow />
              <ScrollThumb><ThumbGrip /></ScrollThumb>
              <Triangle $c="#444" $s={3.5} />
            </ScrollTrack>
          </FilePane>
          <FormRow $mt={9}>
            <FormLabel><FixedText>文件名(N):</FixedText></FormLabel>
            <Combo><FixedText>未标题-1</FixedText><Triangle $c="#000" $s={4} /></Combo>
            <PushButton $primary><FixedText>保存(S)</FixedText></PushButton>
          </FormRow>
          <FormRow $mt={4}>
            <FormLabel><FixedText>保存类型(T):</FixedText></FormLabel>
            <Combo $open>
              <FixedText>{formats[0]}</FixedText><Triangle $c="#000" $s={4} />
              <Options>
                {formats.map((f) => (
                  <Option key={f} $on={f.startsWith("TIFF")}><FixedText>{f}</FixedText></Option>
                ))}
              </Options>
            </Combo>
            <PushButton>取消</PushButton>
          </FormRow>
          <CheckRow><CheckBox /><FixedText>使用画板(U)</FixedText></CheckRow>
          <SizeGrip>
            <svg width="9" height="9" viewBox="0 0 9 9"><path d="M6 0h2v2H6zM3 3h2v2H3zM6 3h2v2H6zM0 6h2v2H0zM3 6h2v2H3zM6 6h2v2H6z" fill="#c3c3c3" /></svg>
          </SizeGrip>
        </Right>
      </Body>
    </Dialog>
  );
}

export default function App() {
  return (
    <Page>
      <Global />
      <Defs />
      <IllustratorWindow />
      <MenuBox $x={73} $y={53} $w={420} $h={605} $size={13.2}>
        <FileMenuItems gutter={31.5} />
      </MenuBox>
      <MenuBox $x={655} $y={187} $w={391} $h={563} $size={12.36} $cropped>
        <FileMenuItems gutter={27.5} top={0.6} />
      </MenuBox>
      <Callout />
      <Backdrop>
        <BackTools><ToolList names={"gradient dropper blend | spray graph".split(" ")} unit={23.1} /></BackTools>
      </Backdrop>
      <Sliver>
        <SliverBar $h={24} $bg="#4a4a4a" />
        <SliverBar $h={33} $bg="#494949">明</SliverBar>
        <SliverBar $h={20} $bg="#303030" />
      </Sliver>
      <ExportDialog />
      <StepNumber $x={922} $y={16}>1</StepNumber>
      <StepNumber $x={1001} $y={123}>2</StepNumber>
      <StepNumber $x={1597} $y={35}>3</StepNumber>
    </Page>
  );
}
